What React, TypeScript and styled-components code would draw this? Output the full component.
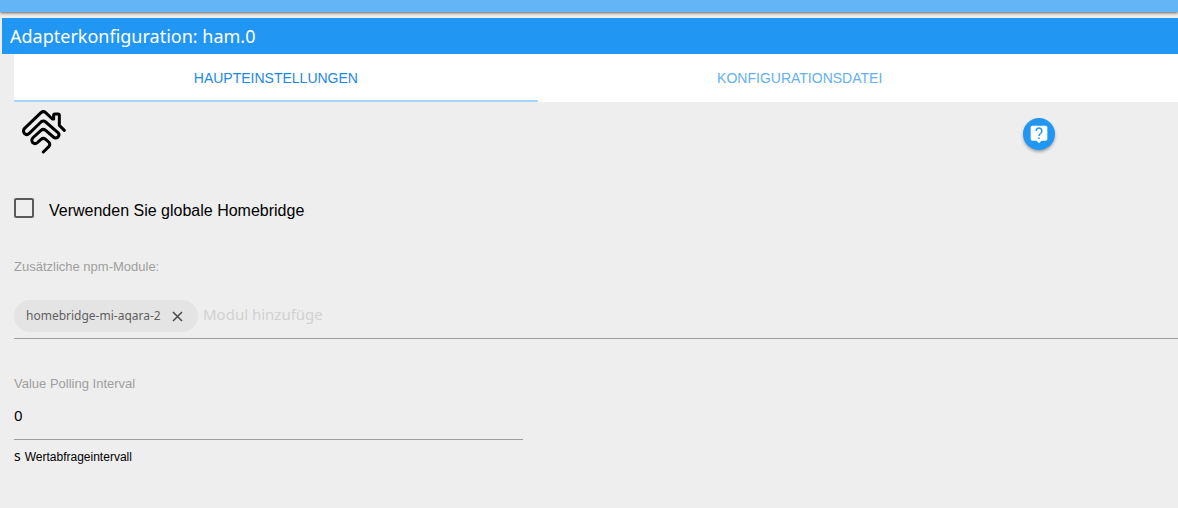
import React, { useState } from "react";
import styled, { createGlobalStyle } from "styled-components";

const ui = '"Noto Sans", "Open Sans", sans-serif';
const arial = '"Liberation Sans", Arial, sans-serif';

const GlobalStyle = createGlobalStyle`
  * { box-sizing: border-box; }
  body { margin: 0; background: #eee; color: #000; font-family: ${arial}; overflow-x: hidden; }
`;

const TopBar = styled.div`
  height: 12px;
  background: #64b5f6;
  box-shadow: 0 1px 3px rgba(0, 0, 0, 0.6);
`;

const Title = styled.h1`
  margin: 6px 0 0 2px;
  padding: 0 8px;
  background: #2196f3;
  color: #fff;
  font: 400 18px/36px ${ui};
`;

const Page = styled.main`
  padding-left: 14px;
`;

const Tabs = styled.nav`
  display: flex;
  height: 48px;
  background: #fff;
`;

const Tab = styled.a<{ $active?: boolean }>`
  flex: 0 0 45%;
  text-align: center;
  text-transform: uppercase;
  text-decoration: none;
  font-size: 14px;
  line-height: 48px;
  color: ${(p) => (p.$active ? "#1e88e5" : "#64b0f0")};
  box-shadow: ${(p) => (p.$active ? "inset 0 -2px #a6d5fa" : "none")};
`;

const Header = styled.div`
  display: grid;
  grid-template-columns: 1fr 155px;
  padding: 8px 0 0 8px;
`;

const Logo = styled.svg`
  display: block;
  width: 44px;
  height: 44px;
`;

const HelpButton = styled.button`
  display: flex;
  align-items: center;
  justify-content: center;
  width: 32px;
  height: 32px;
  margin-top: 8px;
  padding: 0;
  border: 0;
  border-radius: 50%;
  background: #2196f3;
  box-shadow: 0 2px 3px rgba(0, 0, 0, 0.3);
`;

const CheckRow = styled.label`
  display: flex;
  align-items: flex-start;
  gap: 15px;
  margin-top: 44px;
  font-size: 16px;
  line-height: 20px;
`;

const Checkbox = styled.input`
  appearance: none;
  width: 20px;
  height: 20px;
  margin: 0;
  border: 2px solid #5a5a5a;
  border-radius: 2px;
  &:checked { background: #2196f3; }
`;

const CheckText = styled.span`
  padding-top: 3px;
`;

const FieldLabel = styled.label`
  display: block;
  font-size: 13px;
  line-height: 16px;
  color: #9e9e9e;
`;

const Modules = styled.section`
  margin-top: 38px;
`;

const ChipRow = styled.div`
  display: flex;
  gap: 5px;
  height: 57px;
  margin-top: 7px;
  padding-top: 18px;
  border-bottom: 1px solid #9e9e9e;
`;

const Chip = styled.span`
  display: flex;
  align-items: center;
  justify-content: space-between;
  width: 184px;
  height: 32px;
  padding: 0 15px 0 12px;
  border-radius: 16px;
  background: #e4e4e4;
  color: #5f5f5f;
  font: 400 12px/32px ${ui};
`;

const RemoveButton = styled.button`
  display: flex;
  padding: 0;
  border: 0;
  background: none;
`;

const ModuleInput = styled.input`
  width: 124px;
  height: 28px;
  padding: 0;
  border: 0;
  outline: 0;
  background: none;
  font: 400 15px/28px ${ui};
  &::placeholder { color: #d1d1d1; opacity: 1; }
`;

const Polling = styled.section`
  width: 45%;
  margin-top: 37px;
  padding-right: 15px;
`;

const NumberInput = styled.input`
  display: block;
  width: 100%;
  height: 48px;
  padding: 0 0 2px;
  border: 0;
  border-bottom: 1px solid #9e9e9e;
  outline: 0;
  background: none;
  font: 400 15px/44px ${ui};
`;

const Hint = styled.p`
  margin: 7px 0 0;
  font-size: 12px;
  line-height: 18px;
`;

const Unit = styled.span`
  margin-right: 4px;
  font: 400 14px/18px ${ui};
`;

export default function App() {
  const [global, setGlobal] = useState(false);
  const [interval, setInterval] = useState("0");
  return (
    <>
      <GlobalStyle />
      <TopBar />
      <Title>Adapterkonfiguration: ham.0</Title>
      <Page>
        <Tabs>
          <Tab href="#main" $active>Haupteinstellungen</Tab>
          <Tab href="#config">Konfigurationsdatei</Tab>
        </Tabs>
        <Header>
          <Logo viewBox="0 0 132 132" fill="none" stroke="#000" strokeWidth="9" strokeLinecap="round" strokeLinejoin="round" aria-hidden="true">
            <path d="M127 61 L112 46 V16 Q112 12 108 12 H99 Q95 12 95 16 V27 L91 27 L71 8 Q64 2 57 8 L7 56 Q2 63 7 70 Q14 77 21 71 L57 36 Q64 30 71 36 L108 68 Q114 74 108 81 Q101 87 94 81 L71 61 Q64 55 57 61 L32 84 Q27 91 32 98 Q39 104 46 98 L57 88 Q64 82 71 88 L80 96 Q86 102 81 109 L64 126" />
          </Logo>
          <HelpButton type="button" aria-label="Hilfe">
            <svg width="20" height="20" viewBox="0 0 24 24" aria-hidden="true">
              <path fill="#fff" d="M20 2H4q-2 0-2 2v14q0 2 2 2h5l3 3 3-3h5q2 0 2-2V4q0-2-2-2z" />
              <path fill="none" stroke="#2196f3" strokeWidth="1.800" d="M8.500 8.500a3.500 3.500 0 1 1 6 2.300Q12 12.500 12 14.500M12 16.200v1.800" />
            </svg>
          </HelpButton>
        </Header>
        <CheckRow>
          <Checkbox type="checkbox" checked={global} onChange={(e) => setGlobal(e.target.checked)} />
          <CheckText>Verwenden Sie globale Homebridge</CheckText>
        </CheckRow>
        <Modules>
          <FieldLabel htmlFor="modules">Zusätzliche npm-Module:</FieldLabel>
          <ChipRow>
            <Chip>
              homebridge-mi-aqara-2
              <RemoveButton type="button" aria-label="Entfernen">
                <svg width="11" height="11" viewBox="0 0 11 11" stroke="#4a4a4a" strokeWidth="1.500" aria-hidden="true">
                  <path d="M1 1 L10 10 M10 1 L1 10" />
                </svg>
              </RemoveButton>
            </Chip>
            <ModuleInput id="modules" placeholder="Modul hinzufüge" />
          </ChipRow>
        </Modules>
        <Polling>
          <FieldLabel htmlFor="polling">Value Polling Interval</FieldLabel>
          <NumberInput id="polling" value={interval} onChange={(e) => setInterval(e.target.value)} />
          <Hint><Unit>s</Unit>Wertabfrageintervall</Hint>
        </Polling>
      </Page>
    </>
  );
}
